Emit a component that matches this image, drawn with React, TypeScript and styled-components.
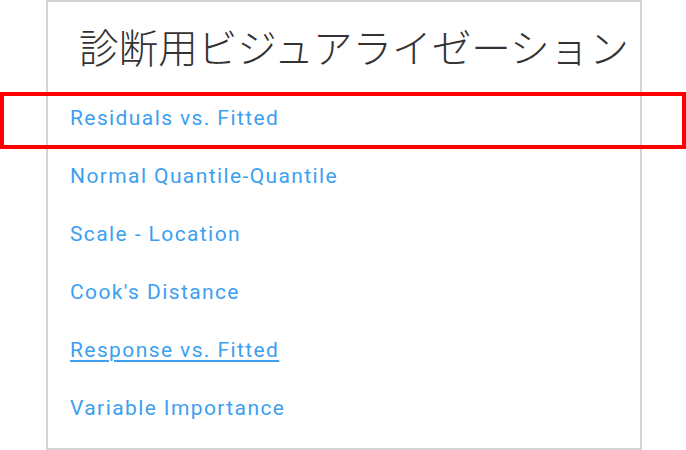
import styled, { createGlobalStyle } from 'styled-components';

const GlobalStyle = createGlobalStyle`
  html, body {
    margin: 0;
    padding: 0;
    background: #fff;
  }
`;

const Page = styled.div`
  position: relative;
  width: 686px;
  height: 450px;
  overflow: hidden;
`;

const Panel = styled.div`
  box-sizing: border-box;
  margin-left: 46px;
  width: 596px;
  height: 450px;
  border: 2px solid #d2d2d2;
  padding: 0 0 0 22px;
`;

const Title = styled.h2`
  margin: 0;
  padding: 18px 0 0 9px;
  height: 69px;
  box-sizing: border-box;
  font-family: "Noto Sans CJK JP", sans-serif;
  font-weight: 300;
  font-size: 39.6px;
  line-height: 52px;
  color: #333;
  white-space: nowrap;
`;

const List = styled.ul`
  list-style: none;
  margin: 0;
  padding: 0;
  margin-top: 18px;
`;

const Item = styled.li`
  height: 58px;
  line-height: 58px;
`;

const Link = styled.a<{ $active?: boolean }>`
  font-family: Roboto, "Liberation Sans", sans-serif;
  font-size: 21px;
  letter-spacing: 1.4px;
  color: #3c9ff0;
  text-decoration: ${(p) => (p.$active ? 'underline' : 'none')};
  text-decoration-thickness: 2px;
  text-underline-offset: 3px;
  cursor: pointer;
`;

/* red annotation frame drawn over the first row */
const Highlight = styled.div`
  position: absolute;
  box-sizing: border-box;
  left: 0;
  top: 92px;
  width: 686px;
  height: 57px;
  border: 4px solid #ff0000;
  pointer-events: none;
`;

const items = [
  'Residuals vs. Fitted',
  'Normal Quantile-Quantile',
  'Scale - Location',
  "Cook's Distance",
  'Response vs. Fitted',
  'Variable Importance',
];

const App = () => {
  return (
    <Page>
      <GlobalStyle />
      <Panel>
        <Title>診断用ビジュアライゼーション</Title>
        <List>
          {items.map((label) => (
            <Item key={label}>
              <Link $active={label === 'Response vs. Fitted'}>{label}</Link>
            </Item>
          ))}
        </List>
      </Panel>
      <Highlight />
    </Page>
  );
};

export default App;
